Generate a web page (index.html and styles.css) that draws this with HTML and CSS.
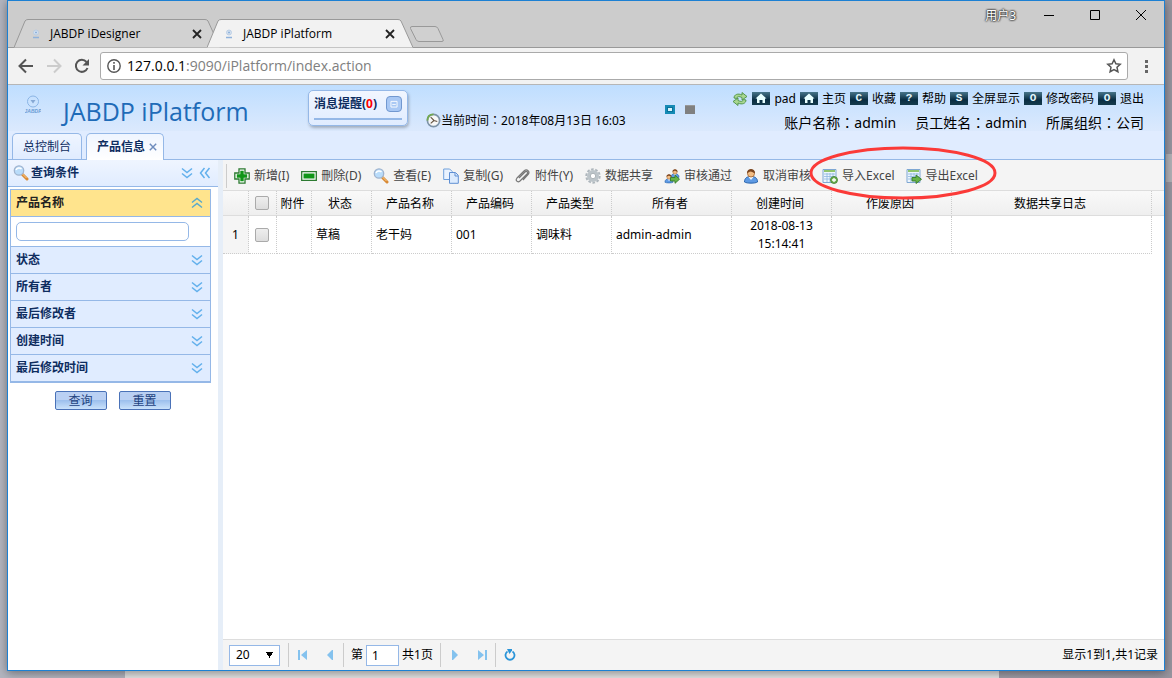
FILE: index.html
```html
<!DOCTYPE html>
<html lang="zh-CN">
<head>
<meta charset="utf-8">
<title>JABDP iPlatform</title>
<link rel="stylesheet" href="styles.css">
</head>
<body>
<svg class="defs" aria-hidden="true">
  <symbol id="down" viewBox="0 0 12 12"><path d="M1 1.5l5 4 5-4M1 6.5l5 4 5-4" fill="none" stroke="#62b0ec" stroke-width="1.5"/></symbol>
  <symbol id="up" viewBox="0 0 12 12"><path d="M1 5.500l5-4 5 4M1 10.500l5-4 5 4" fill="none" stroke="#5aa9cc" stroke-width="1.5"/></symbol>
  <symbol id="left" viewBox="0 0 12 12"><path d="M5.500 1l-4 5 4 5M10.500 1l-4 5 4 5" fill="none" stroke="#62b0ec" stroke-width="1.500"/></symbol>
  <symbol id="cross" viewBox="0 0 10 10"><path d="M1 1l8 8M9 1L1 9" fill="none" stroke="currentColor" stroke-width="1.800"/></symbol>
  <symbol id="fav" viewBox="0 0 10 10"><circle cx="5" cy="3.500" r="2.500" fill="#d3e0ef" stroke="#b4c9e2" stroke-width=".8"/><path d="M2 8.500h6M4 3.500h2" stroke="#8fb2dc" stroke-width="1.500"/></symbol>
  <symbol id="tab" viewBox="0 0 206 29" preserveAspectRatio="none"><path d="M0 28.500L11 2Q12 .5 14 .5H191Q193 .5 194 2L206 28.500" stroke="#999" /></symbol>
  <symbol id="search" viewBox="0 0 16 16"><path d="M9.500 9.500l4.500 4.500" stroke="#d98a35" stroke-width="3" stroke-linecap="round"/><path d="M9.500 9l4 4" stroke="#ffd08a"/><circle cx="6" cy="5.500" r="4.700" fill="#b9dcfa" stroke="#a0b4cf" stroke-width="1.300"/><path d="M3 5c1-2.500 4-2.500 5.500-1" fill="none" stroke="#fff" stroke-width="1.500"/></symbol>
  <symbol id="home" viewBox="0 0 12 11"><path d="M6 .5L.5 5.500H2V10h2.500V7h3v3H10V5.500h1.500z" fill="#e8ffff"/></symbol>
  <symbol id="sheet" viewBox="0 0 16 16"><path d="M1 1.500h13v13H1z" fill="#edf5fc" stroke="#7fa7d3"/><path d="M2 3h11" stroke="#8fc46c" stroke-width="2"/><path d="M2 6h11M2 8.500h11M2 11h11M5 5v9M8 5v9M11 5v9" stroke="#8eb6df" stroke-width=".8"/></symbol>
  <symbol id="person" viewBox="0 0 16 16"><path d="M1.500 14c0-4 2.500-5.500 6.500-5.500s6.500 1.500 6.500 5.500c-2 1.500-11 1.500-13 0z" fill="#5e9ae4" stroke="#2864ad"/><path d="M5.500 9L8 12l2.500-3" fill="#eef6ff"/><circle cx="8" cy="5.500" r="3.500" fill="#f2bd84" stroke="#a66329" stroke-width=".8"/><path d="M4 5.500C3.500-.5 12.500-.5 12 5.500 10 4.500 9.500 3.500 7 3.500 6 4.500 5 4 4 5.500z" fill="#7a431d"/></symbol>
  <symbol id="page-edge" viewBox="0 0 12 12"><path d="M1 1h2v10H1zM10 1v10L4 6z" fill="#84c2ee"/></symbol>
  <symbol id="page-step" viewBox="0 0 12 12"><path d="M9 1v10H8L3 6l5-5z" fill="#84c2ee"/></symbol>
</svg>

<div class="backdrop"></div>
<div class="thumb"></div>
<div class="window">
  <div class="titlebar">
    <div class="tabs">
      <div class="tab"><svg class="shape"><use href="#tab" fill="#d2d2d2"/></svg><svg class="fav"><use href="#fav"/></svg><span>JABDP iDesigner</span><button aria-label="关闭"><svg><use href="#cross"/></svg></button></div>
      <div class="tab active"><svg class="shape"><use href="#tab" fill="#f2f2f2"/></svg><svg class="fav"><use href="#fav"/></svg><span>JABDP iPlatform</span><button aria-label="关闭"><svg><use href="#cross"/></svg></button></div>
      <button class="newtab" aria-label="新标签页"><svg viewBox="0 0 36 18"><path d="M3 1.500h23q2 0 3 2l5 11q1 2-1 2H10q-2 0-3-2L1.500 3.500q-.5-2 1.500-2z" fill="#d0d0d0" stroke="#999"/></svg></button>
    </div>
    <span class="user">用户3</span>
    <div class="winctl">
      <button aria-label="最小化"><svg viewBox="0 0 12 12"><path d="M1 6.500h10" stroke="#000"/></svg></button>
      <button aria-label="最大化"><svg viewBox="0 0 12 12"><path d="M1.500 1.500h9v9h-9z" fill="none" stroke="#000"/></svg></button>
      <button aria-label="关闭"><svg viewBox="0 0 12 12"><path d="M1 1l10 10M11 1L1 11" stroke="#000"/></svg></button>
    </div>
  </div>
  <div class="navbar">
    <button aria-label="后退"><svg viewBox="0 0 16 16"><path d="M15 8H2M8 1.500L1.500 8 8 14.500" fill="none" stroke="#555" stroke-width="2"/></svg></button>
    <button aria-label="前进"><svg viewBox="0 0 16 16"><path d="M1 8h13M8 1.500L14.500 8 8 14.500" fill="none" stroke="#ccc" stroke-width="2"/></svg></button>
    <button aria-label="刷新"><svg viewBox="0 0 16 16"><path d="M13.500 10A6 6 0 1 1 12.500 4" fill="none" stroke="#555" stroke-width="2"/><path d="M15 1v6.500H8.500z" fill="#555"/></svg></button>
    <div class="address">
      <svg viewBox="0 0 14 14"><circle cx="7" cy="7" r="6.200" fill="none" stroke="#555" stroke-width="1.400"/><path d="M7 6v5M7 3v1.800" stroke="#555" stroke-width="1.600"/></svg>
      <span class="url"><b>127.0.0.1</b>:9090/iPlatform/index.action</span>
      <button aria-label="收藏此页"><svg viewBox="0 0 16 16"><path d="M8 1.800l1.900 4 4.300.5-3.200 3 .9 4.400L8 11.500l-3.900 2.200.9-4.400-3.200-3 4.300-.5z" fill="none" stroke="#555" stroke-width="1.500"/></svg></button>
    </div>
    <button aria-label="菜单"><svg viewBox="0 0 16 16"><path d="M7 2h3v3H7zM7 7h3v3H7zM7 12h3v3H7z" fill="#666"/></svg></button>
  </div>

  <header class="banner">
    <svg class="logo" viewBox="0 0 16 20"><circle cx="8" cy="6.500" r="5.500" fill="none" stroke="#8bb5e5"/><path d="M5.500 5h5L8 8.500z" fill="#86a8d4"/><text x="8" y="18" text-anchor="middle">JABDP</text></svg>
    <h1>JABDP iPlatform</h1>
    <div class="notice"><div class="notice-top"><strong>消息提醒(<em>0</em>)</strong><button aria-label="收起"><svg viewBox="0 0 16 16"><path d="M4.500 5h7v6.500h-7z" fill="#a9c8f4" stroke="#fff"/><path d="M6 8.500h4" stroke="#fff"/></svg></button></div></div>
    <div class="clock"><svg viewBox="0 0 16 16"><circle cx="8" cy="8" r="6.500" fill="#f7f8f8" stroke="#7d93a8" stroke-width="1.800"/><path d="M1.500 8C1.500 4 4 1.500 8 1.500" fill="none" stroke="#72a950" stroke-width="2"/><path d="M5 4.500L8.500 8 12 9M8.500 8L5 11" fill="none" stroke="#654" stroke-width="1.200"/></svg><span>当前时间<i class="colon" lang="zh-TW">：</i>2018年08月13日 16:03</span></div>
    <div class="skins"><button class="skin chosen" aria-label="蓝色主题"></button><button class="skin" aria-label="灰色主题"></button></div>
    <div class="account">
      <nav>
        <a href="#" aria-label="刷新"><svg class="ic" viewBox="0 0 16 16"><path d="M2 7C2 3.500 6 2 10 4V1.500L15 5.500 10 9V6.500C7 5 5 5.500 4.500 7.500z" fill="#a8d690" stroke="#4c9145" stroke-width=".9"/><path d="M14 9c0 3.500-4 5-8 3v2.500L1 10.500 6 7v2.500c3 1.500 5 1 5.500-1z" fill="#a8d690" stroke="#4c9145" stroke-width=".9"/></svg></a>
        <a href="#"><span class="badge"><svg><use href="#home"/></svg></span>pad</a>
        <a href="#"><span class="badge"><svg><use href="#home"/></svg></span>主页</a>
        <a href="#"><span class="badge">C</span>收藏</a>
        <a href="#"><span class="badge">?</span>帮助</a>
        <a href="#"><span class="badge">S</span>全屏显示</a>
        <a href="#"><span class="badge">O</span>修改密码</a>
        <a href="#"><span class="badge">O</span>退出</a>
      </nav>
      <p><span>账户名称<i class="colon" lang="zh-TW">：</i>admin</span><span>员工姓名<i class="colon" lang="zh-TW">：</i>admin</span><span>所属组织<i class="colon" lang="zh-TW">：</i>公司</span></p>
    </div>
  </header>
  <div class="pagetabs">
    <button>总控制台</button>
    <button class="on">产品信息<svg><use href="#cross"/></svg></button>
  </div>

  <div class="work">
    <aside>
      <div class="side-head"><svg class="ic"><use href="#search"/></svg><strong>查询条件</strong><button aria-label="全部展开"><svg><use href="#down"/></svg></button><button aria-label="折叠面板"><svg><use href="#left"/></svg></button></div>
      <form>
        <div class="accordion">
          <button type="button" class="open" id="name-label">产品名称<svg><use href="#up"/></svg></button>
          <div class="field"><input type="text" aria-labelledby="name-label"></div>
          <button type="button">状态<svg><use href="#down"/></svg></button>
          <button type="button">所有者<svg><use href="#down"/></svg></button>
          <button type="button">最后修改者<svg><use href="#down"/></svg></button>
          <button type="button">创建时间<svg><use href="#down"/></svg></button>
          <button type="button">最后修改时间<svg><use href="#down"/></svg></button>
        </div>
        <div class="actions"><button type="button">查询</button><button type="reset">重置</button></div>
      </form>
    </aside>
    <main>
      <div class="toolbar">
        <button class="keyed"><svg class="ic" viewBox="0 0 16 16"><path d="M5 .8h6V5h4.200v6H11v4.200H5V11H.8V5H5z" fill="#fff" stroke="#2c7a31" stroke-width="1.300"/><path d="M6.300 2.800h3.400v3.500h3.500v3.400H9.700v3.500H6.300V9.700H2.800V6.300h3.500z" fill="#109518"/></svg>新增(I)</button>
        <button class="keyed"><svg class="ic" viewBox="0 0 16 16"><path d="M.7 3.700h14.600v8.600H.7z" fill="#fff" stroke="#2c7a31" stroke-width="1.300"/><path d="M2.500 5.500h11v5h-11z" fill="#109518"/></svg>刪除(D)</button>
        <button class="keyed"><svg class="ic"><use href="#search"/></svg>查看(E)</button>
        <button class="keyed"><svg class="ic" viewBox="0 0 16 16"><path d="M.7 1h6l2.500 2.500v8H.7z" fill="#eaf3ff" stroke="#6fa0dc"/><path d="M6.500 4.500h6L15.300 7.300v8H6.500z" fill="#dcebfe" stroke="#5f8fd3"/><path d="M12 5v3h3" fill="none" stroke="#5f8fd3"/></svg>复制(G)</button>
        <button class="keyed"><svg class="ic" viewBox="0 0 16 16"><path d="M4 10l6-6c1.500-1.500 3.500.3 2 2l-7 7c-2.500 2-5-.5-3-3l7-7c3-2.500 6.500.5 4 3.500L8 12" fill="none" stroke="#777" stroke-width="1.200"/></svg>附件(Y)</button>
        <button><svg class="ic" viewBox="0 0 16 16"><circle cx="8" cy="8" r="6.700" fill="none" stroke="#aeb6bc" stroke-width="2" stroke-dasharray="2.600 1.600"/><circle cx="8" cy="8" r="4.300" fill="none" stroke="#bcc4c9" stroke-width="3.400"/><circle cx="8" cy="8" r="2.700" fill="#fff" stroke="#9ca5aa" stroke-width=".8"/></svg>数据共享</button>
        <button><svg class="ic" viewBox="0 0 16 16"><use href="#person" x="6" width="10" height="11"/><use href="#person" y="5" width="10" height="11"/><path d="M6.500 9.500H11V7l4.500 4.200L11 15.300V13H6.500z" fill="#66b447" stroke="#357b2b" stroke-width=".9"/></svg>审核通过</button>
        <button><svg class="ic"><use href="#person"/></svg>取消审核</button>
        <div class="marked">
          <button><svg class="ic" viewBox="0 0 16 16"><use href="#sheet"/><circle cx="12" cy="12" r="3.500" fill="#6eaf4f" stroke="#3d7e30" stroke-width=".8"/><path d="M12 10v4M10 12h4" stroke="#fff" stroke-width="1.300"/></svg>导入Excel</button>
          <button><svg class="ic" viewBox="0 0 16 16"><use href="#sheet"/><path d="M6 9.500h4V7l5.500 4.300L10 15.500V13H6z" fill="#66b447" stroke="#357b2b" stroke-width=".9"/></svg>导出Excel</button>
          <svg class="ring" viewBox="0 0 188 54" preserveAspectRatio="none"><ellipse cx="94" cy="27" rx="92" ry="25" fill="none" stroke="#fb3a38" stroke-width="3"/></svg>
        </div>
      </div>
      <div class="gridbox">
        <table>
          <colgroup><col class="w26"><col class="w28"><col class="w35"><col class="w60"><col class="w80"><col class="w80"><col class="w80"><col class="w120"><col class="w100"><col class="w120"><col class="w200"><col></colgroup>
          <thead><tr><th></th><th><input type="checkbox" aria-label="全选"></th><th>附件</th><th>状态</th><th>产品名称</th><th>产品编码</th><th>产品类型</th><th>所有者</th><th>创建时间</th><th>作废原因</th><th>数据共享日志</th><th></th></tr></thead>
          <tbody><tr><td class="num">1</td><td class="mid"><input type="checkbox" aria-label="选择第1行"></td><td></td><td>草稿</td><td>老干妈</td><td>001</td><td>调味料</td><td>admin-admin</td><td class="mid">2018-08-13 15:14:41</td><td></td><td></td><td class="rest"></td></tr></tbody>
        </table>
      </div>
      <footer>
        <select aria-label="每页记录数"><option>20</option></select>
        <i class="sep first"></i>
        <button aria-label="首页"><svg><use href="#page-edge"/></svg></button>
        <button aria-label="上一页"><svg><use href="#page-step"/></svg></button>
        <i class="sep"></i>
        <label class="pageno">第<input type="text" value="1"></label><span class="pages">共1页</span>
        <i class="sep"></i>
        <button class="flip" aria-label="下一页"><svg><use href="#page-step"/></svg></button>
        <button class="flip" aria-label="末页"><svg><use href="#page-edge"/></svg></button>
        <i class="sep"></i>
        <button aria-label="刷新"><svg viewBox="0 0 12 12"><path d="M3.500 2.500A4.500 4.500 0 1 0 8.500 2.500" fill="none" stroke="#2a94d8" stroke-width="1.800"/><path d="M3 0h5v1.500L5.500 5z" fill="#2a94d8"/></svg></button>
        <span class="total">显示1到1,共1记录</span>
      </footer>
    </main>
  </div>
</div>
</body>
</html>
```
FILE: styles.css
```css
* { box-sizing: border-box; }
body {
  margin: 0;
  height: 100vh;
  padding: 0 7px 7px;
  position: relative;
  overflow: hidden;
  background: linear-gradient(90deg, #b3b5bf, #a9a8b2 60%, #98959f);
  color: #000;
  font: 12px/18px "Noto Sans", "Noto Sans CJK SC", sans-serif;
}
button { border: 0; padding: 0; background: none; color: inherit; font: inherit; display: flex; align-items: center; justify-content: center; }
svg { display: block; width: 12px; height: 12px; flex: none; }
.defs { position: absolute; width: 0; height: 0; }
.ic { width: 16px; height: 16px; }
.backdrop { position: absolute; left: 10.7%; right: 14.8%; bottom: 0; height: 20px; background: #e2e2e2; }
.thumb { position: absolute; right: 0; top: 154px; width: 6px; height: 28px; background: #b2b1b6; }
.window {
  position: relative;
  height: 100%;
  display: flex;
  flex-direction: column;
  border: 1px solid #1c80d3;
  background: #fff;
  box-shadow: 0 2px 9px rgba(0, 0, 0, .4);
}

/* browser chrome */
.titlebar { height: 47px; display: flex; align-items: flex-start; background: #ccc; border-bottom: 1px solid #999; }
.tabs { display: flex; align-self: flex-end; flex: 1; padding-left: 6px; margin-bottom: -1px; font-family: "Open Sans", sans-serif; }
.tab { position: relative; width: 206px; height: 29px; display: flex; align-items: center; gap: 9px; padding: 0 18px 0 17px; }
.tab + .tab { margin-left: -13px; }
.tab.active { z-index: 1; }
.tab > * { position: relative; }
.tab .shape { position: absolute; left: 0; top: 0; width: 100%; height: 100%; }
.fav, .tab button svg { width: 10px; height: 10px; }
.tab span { flex: 1; }
.tab button { color: #222; }
.newtab { align-self: center; margin-left: -4px; }
.newtab svg { width: 36px; height: 18px; }
.user { margin-top: 6px; color: #fff; text-shadow: 0 0 2px #222, 0 0 2px #222, 0 0 2px #333; }
.winctl { display: flex; gap: 34px; padding: 8px 17px 0 27px; }
.navbar { height: 37px; display: flex; align-items: center; gap: 12px; padding: 0 10px; background: #f2f2f2; border-bottom: 1px solid #b6b6b6; }
.navbar > button svg { width: 16px; height: 16px; }
.address { flex: 1; height: 28px; display: flex; align-items: center; gap: 6px; padding: 0 5px 0 6px; margin: 0 -2px; border: 1px solid #aaa; border-radius: 3px; background: #fff; }
.address > svg { width: 14px; height: 14px; }
.address button svg { width: 16px; height: 16px; }
.url { flex: 1; font: 14px/20px "Open Sans", sans-serif; color: #808080; }
.url b { font-weight: normal; color: #000; }

/* application banner */
.banner { height: 46px; display: flex; align-items: flex-start; padding: 0 20px 0 17px; background: linear-gradient(#bfdeff, #dbe9fd); }
.logo { width: 16px; height: 20px; margin-top: 10px; }
.logo text { font: italic bold 5px "Liberation Sans", sans-serif; fill: #6a9bd4; }
h1 { margin: 8px 0 0 22px; font: 25px/36px "Open Sans", sans-serif; color: #1e6bb8; white-space: nowrap; width: 245px; }
.notice { width: 100px; height: 36px; margin-top: 5px; padding: 4px 5px; border: 1px solid #95b8e7; border-radius: 5px; background: linear-gradient(#f1f6ff, #e0ecff); box-shadow: 1px 2px 3px rgba(0, 0, 0, .25); color: #0e2d5f; }
.notice-top { display: flex; align-items: center; justify-content: space-between; height: 25px; padding-bottom: 6px; border-bottom: 2px solid #95b8e7; white-space: nowrap; }
.notice em { font-style: normal; color: red; }
.notice button { border: 1px solid #7298d0; border-radius: 4px; background: #a9c8f4; }
.notice button svg { width: 14px; height: 14px; }
.clock { display: flex; align-items: center; margin: 26px 0 0 18px; white-space: nowrap; }
.clock svg { width: 15px; height: 15px; }
.colon { font-style: normal; font-family: "Noto Sans CJK TC", sans-serif; }
.skins { display: flex; gap: 10px; margin: 20px 0 0 39px; }
.skin { width: 10px; height: 9px; background: #808080; border-top: 1px solid #999; }
.skin.chosen { border: 2px solid #168bb5; background: #d8f4fb; box-shadow: inset 0 0 0 1px #07729b; }
.account { margin-left: auto; white-space: nowrap; }
nav { display: flex; align-items: center; justify-content: flex-end; gap: 4px; height: 27px; }
nav a { display: flex; align-items: center; gap: 4px; color: #000; text-decoration: none; }
.badge { width: 18px; height: 13px; display: flex; align-items: center; justify-content: center; background: linear-gradient(#47758a, #092d42 60%, #163c4e); color: #e4f7ff; font: bold 11px/13px "Liberation Mono", monospace; }
.badge svg { width: 12px; height: 11px; }
.account p { display: flex; justify-content: flex-end; gap: 19px; margin: 0; font-size: 14px; line-height: 20px; }
.pagetabs { height: 29px; display: flex; align-items: stretch; gap: 4px; padding: 2px 4px 0; background: #e0ecff; border-bottom: 1px solid #95b8e7; color: #0e2d5f; }
.pagetabs button { padding: 0 10px; gap: 4px; border: 1px solid #95b8e7; border-bottom: 0; border-radius: 5px 5px 0 0; background: linear-gradient(#eff5ff, #e0ecff); }
.pagetabs .on { margin-bottom: -1px; padding-right: 6px; background: linear-gradient(#eff5ff, #fff); font-weight: bold; }
.pagetabs svg { width: 8px; height: 8px; color: #6e8cbd; }

/* query panel */
.work { flex: 1; min-height: 0; display: flex; }
aside { width: 215px; flex: none; border-right: 5px solid #e6eef8; }
.side-head { height: 27px; display: flex; align-items: center; gap: 6px; padding: 0 7px 0 5px; background: linear-gradient(#eff5ff, #e0ecff); border-bottom: 1px solid #95b8e7; color: #0e2d5f; }
.side-head strong { flex: 1; margin-left: -4px; }
form { padding: 2px 7px 0 2px; }
.accordion { border: 1px solid #95b8e7; border-bottom-width: 2px; }
.accordion button { width: 100%; height: 27px; justify-content: space-between; padding: 0 7px 0 5px; border-top: 1px solid #95b8e7; background: #e0ecff; color: #0e2d5f; font-weight: bold; }
.accordion .open { height: 26px; border-top: 0; background: #ffe48d; color: #222; }
.field { padding: 5px; border-top: 1px solid #95b8e7; height: 30px; }
.field input { display: block; width: 173px; height: 19px; border: 1px solid #95b8e7; border-radius: 5px; }
.actions { display: flex; justify-content: center; gap: 12px; padding: 8px 0 0 4px; }
.actions button { width: 52px; height: 19px; border: 1px solid #4a72b8; border-radius: 2px; background: linear-gradient(#bad0f3 45%, #9dc0ed 50%, #cae2fb); color: #1f437f; }

/* grid */
main { flex: 1; min-width: 0; display: flex; flex-direction: column; }
.toolbar { height: 31px; display: flex; align-items: center; gap: 11px; padding: 1px 0 0 12px; background: #f4f4f4; border-bottom: 1px solid #ddd; color: #444; white-space: nowrap; }
.toolbar::before { content: ""; height: 24px; margin: 0 -4px 0 -9px; border-left: 1px solid #ccc; }
.toolbar button { gap: 4px; }
.toolbar .keyed { padding-right: 1px; }
.marked { position: relative; display: flex; gap: 11px; }
.ring { position: absolute; left: -13px; top: -21px; width: 188px; height: 54px; pointer-events: none; z-index: 2; }
.gridbox { flex: 1; min-height: 0; }
table { width: 100%; table-layout: fixed; border-collapse: separate; border-spacing: 0; }
.w26 { width: 26px; } .w28 { width: 28px; } .w35 { width: 35px; } .w60 { width: 60px; }
.w80 { width: 80px; } .w100 { width: 100px; } .w120 { width: 120px; } .w200 { width: 200px; }
th, td { padding: 1px 4px 0; border-right: 1px dotted #ccc; font-weight: normal; }
th { height: 25px; padding: 2px 3px 0 0; background: linear-gradient(#f9f9f9, #efefef); border-bottom: 1px solid #ddd; }
th:last-child { border-right: 0; }
td { height: 37px; border-bottom: 1px dotted #ccc; }
td.rest { border: 0; }
.mid, .num { text-align: center; }
.num { background: #f5f5f5; padding: 1px 0 0; }
th:nth-child(2), td.mid:nth-child(2) { padding: 0 1px 0 0; }
table input { appearance: none; display: block; width: 14px; height: 14px; margin: 0 auto; border: 1px solid #aaa; border-radius: 2px; background: linear-gradient(#eee, #ddd); }
footer { height: 31px; display: flex; align-items: center; padding: 0 6px; background: #f4f4f4; border-top: 1px solid #ddd; }
footer select {
  appearance: none;
  width: 51px;
  height: 21px;
  padding: 0 6px;
  border: 1px solid #95b8e7;
  border-radius: 0;
  color: #000;
  font: inherit;
  background: conic-gradient(from -30deg at 50% 100%, #000 60deg, #fff 0) no-repeat right 6px top 6px / 7px 6px, #fff;
}
.sep { height: 24px; border-left: 1px solid #ccc; }
.sep.first { margin-left: 8px; }
footer button { width: 26px; height: 26px; margin-left: 1px; }
.flip svg { transform: scaleX(-1); }
.pageno { display: flex; align-items: center; gap: 3px; margin: 0 3px 0 7px; }
.pageno input { width: 33px; height: 21px; padding: 0 5px; border: 1px solid #95b8e7; font: inherit; }
.pages { margin-right: 7px; }
.total { margin-left: auto; }
```
